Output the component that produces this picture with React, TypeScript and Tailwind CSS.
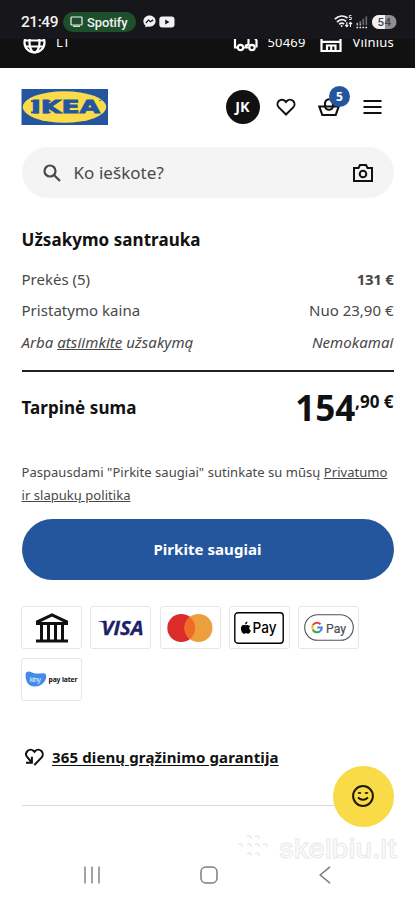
import React from "react";

function StatusBar() {
  return (
    <div className="h-[39px] bg-[#17171b] pl-[21px] pr-[18px] pt-[4px] flex items-center justify-between text-[#f1f1f3]">
      <div className="flex items-center">
        <svg width="38" height="16" viewBox="0 0 38 16" fill="currentColor">
          <text x="0" y="13" fontFamily="Roboto" fontSize="15.5" fontWeight="500" textLength="37.5">
            21:49
          </text>
        </svg>
        <div className="ml-[4px] h-[20px] w-[73px] rounded-full bg-[#1d4f2c] flex items-center pl-[7px]">
          <svg width="13" height="11" viewBox="0 0 13 11" fill="none" stroke="currentColor" strokeWidth="1.2">
            <rect x="1" y="1" width="11" height="8" rx="0.8" />
            <path d="M3 10.3h7" />
          </svg>
          <svg width="42" height="16" viewBox="0 0 42 16" fill="currentColor" className="ml-[4px]">
            <text x="0" y="12.5" fontFamily="Roboto" fontSize="13" fontWeight="500" textLength="40.5">
              Spotify
            </text>
          </svg>
        </div>
        <svg width="13" height="13" viewBox="0 0 13 13" className="ml-[7px]">
          <path
            d="M6.5.5C3 .5.4 3 .4 6.2c0 1.8.8 3.3 2 4.3v2l1.9-1c.7.2 1.4.3 2.2.3 3.5 0 6.1-2.5 6.1-5.7S10 .5 6.5.5z"
            fill="#f1f1f3"
          />
          <path d="M2.8 8l2.7-2.9 2 1.7 2.7-1.9" fill="none" stroke="#17171b" strokeWidth="1.3" />
        </svg>
        <svg width="16" height="12" viewBox="0 0 16 12" className="ml-[3px]">
          <rect x="0.3" y="0.5" width="15.2" height="11" rx="3" fill="#f1f1f3" />
          <path d="M6.2 3.5l4.3 2.5-4.3 2.5z" fill="#17171b" />
        </svg>
      </div>
      <div className="flex items-center">
        <svg width="19" height="15" viewBox="0 0 19 15" fill="none" stroke="currentColor" strokeWidth="1.8">
          <path d="M.8 5.2C4.8 1.4 9.8 1.2 13.5 4" />
          <path d="M3 8c2.6-2.6 6.2-3 9-.8" />
          <path d="M5.2 10.3c1.4-1.3 3.4-1.4 4.9-.3" />
          <circle cx="7.7" cy="12" r="0.9" fill="currentColor" stroke="none" />
          <path d="M17.5 1.5h-2.2v2h2v2h-2.3" strokeWidth="0.9" />
          <path d="M12.8 8v4.5M11.3 11l1.5 1.6 1.5-1.6M16.5 13V8.5M15 10l1.5-1.6L18 10" strokeWidth="1.1" />
        </svg>
        <svg width="13" height="14" viewBox="0 0 13 14" className="ml-[3px]">
          <path d="M1.3 10V7.8M4.3 10V6M7.3 10V3.8M10.3 10V1.5" stroke="#66666a" strokeWidth="1.7" />
          <path d="M.5 12.5h1.6M3.5 12.5h1.6M6.5 12.5h1.6M9.5 12.5h1.6" stroke="#f1f1f3" strokeWidth="1.6" />
          <path d="M1.3 10.6V8M4.3 10.6V8.5" stroke="#c9c9cc" strokeWidth="1" />
        </svg>
        <svg width="25" height="14" viewBox="0 0 25 14" className="ml-[3px]">
          <rect width="24.5" height="14" rx="7" fill="#8f8f92" />
          <path d="M7 0h6v14H7A7 7 0 0 1 7 0z" fill="#f1f1f3" />
          <text x="5.5" y="11" fontFamily="Roboto" fontSize="11.5" fontWeight="500" fill="#444" textLength="13.5">
            54
          </text>
        </svg>
      </div>
    </div>
  );
}

function LocationStrip() {
  return (
    <div className="h-[29px] bg-[#111] overflow-hidden text-white">
      {/* scrolled under the status bar, so the row is cut off at its top */}
      <div className="-mt-[9px] h-[26px] flex items-center pl-[23px] pr-[22px] text-[13px] tracking-[0.2px]">
        <svg width="23" height="23" viewBox="0 0 23 23" fill="none" stroke="currentColor" strokeWidth="2.2" className="-mt-[2px]">
          <circle cx="11.5" cy="11.5" r="10" />
          <ellipse cx="11.5" cy="11.5" rx="5" ry="10" />
          <path d="M2 9.5h19M3 15.5h17" />
        </svg>
        <span className="ml-[10px]">LT</span>
        <svg width="26" height="22" viewBox="0 0 26 22" fill="none" stroke="currentColor" strokeWidth="2.2" className="-mt-[4px] ml-auto">
          <path d="M5.500 17.500H3V4M10.500 17.500h6M13 16l3.500-1.500V3H20l4.500 7.500v7" />
          <circle cx="8.5" cy="17.5" r="2.7" />
          <circle cx="20" cy="17.5" r="2.7" />
        </svg>
        <span className="ml-[9px] w-[38px]">50469</span>
        <svg width="22" height="22" viewBox="0 0 22 22" fill="none" stroke="currentColor" strokeWidth="2.2" className="-mt-[3px] ml-[15px]">
          <path d="M1.500 3v17h19V3M1.500 10.800h19M7 20v-5.500h8.500V20M11.200 20v-5.500" />
        </svg>
        <span className="ml-[10px] -mr-px">Vilnius</span>
      </div>
    </div>
  );
}

function Header() {
  return (
    <header className="h-[79px] pb-px pl-[21px] pr-[33.5px] flex items-center text-[#111]">
      <svg width="87" height="36" viewBox="0 0 87 36">
        <rect x="0.5" width="86.5" height="36" fill="#24569f" />
        <ellipse cx="43.5" cy="18" rx="41.8" ry="15.8" fill="#fadb4a" />
        <g fill="#24569f">
          <text
            x="10"
            y="24"
            fontFamily="DejaVu Sans"
            fontSize="17"
            fontWeight="700"
            stroke="#24569f"
            strokeWidth="0.8"
            textLength="69"
            lengthAdjust="spacingAndGlyphs"
          >
            IKEA
          </text>
          {/* slabs of the I and the foot of the K */}
          <path d="M10 11.300h8v1.800h-8zM10 22.500h8v1.800h-8zM22 11.300h7.500v1.800H22zM22 22.500h7.500v1.800H22z" />
          <circle cx="79" cy="11.500" r="0.8" />
        </g>
      </svg>
      <div className="ml-auto size-[34px] rounded-full bg-[#111] text-white text-[14.5px] font-bold flex items-center justify-center">
        JK
      </div>
      <svg width="20" height="18" viewBox="0 0 20 18" fill="none" stroke="currentColor" strokeWidth="2" className="ml-[16px]">
        <path d="M10 16.500L2.800 9.400C1.100 7.600 1.100 4.700 2.800 3 4.600 1.200 7.400 1.200 9.200 3l.8.900.8-.9c1.800-1.800 4.600-1.800 6.400 0 1.700 1.700 1.700 4.600 0 6.400z" />
      </svg>
      <div className="relative ml-[21px]">
        <svg width="24" height="20" viewBox="0 0 24 20" fill="none" stroke="currentColor" strokeWidth="2.1">
          <path d="M2.300 9.500h19.400l-3 8.500H5.300z" />
          <path d="M8 9.500V6.500a4 4.300 0 0 1 8 0v2.500a4 3.800 0 0 1-8 0" />
        </svg>
        <span className="absolute -top-[11px] left-[12.5px] size-[21px] rounded-full bg-[#24569f] text-white text-[12px] font-bold flex items-center justify-center">
          5
        </span>
      </div>
      <svg width="19" height="14" viewBox="0 0 19 14" stroke="currentColor" strokeWidth="2" className="ml-[22px]">
        <path d="M.5 1h18M.5 7h18M.5 13h18" />
      </svg>
    </header>
  );
}

function SearchBox() {
  return (
    <div className="mx-[21.5px] h-[51px] rounded-full bg-[#f4f4f4] flex items-center pl-[21px] pr-[21px] text-[#484848]">
      <svg width="18" height="18" viewBox="0 0 18 18" fill="none" stroke="currentColor" strokeWidth="2.2">
        <circle cx="7" cy="7" r="5.5" />
        <path d="M11 11l6 6" />
      </svg>
      <span className="ml-[13px] text-[17px] tracking-[0.05px]">Ko ieškote?</span>
      <svg width="20" height="18" viewBox="0 0 20 18" fill="none" stroke="#111" strokeWidth="2" className="ml-auto">
        <path d="M1 4h4.500L7 1h6l1.500 3H19v13H1z" />
        <circle cx="10" cy="10" r="3.3" />
      </svg>
    </div>
  );
}

function Summary() {
  return (
    <section className="mx-[21.5px] mt-[29px] text-[#484848] text-[15px]">
      <h2 className="h-[26px] leading-[26px] text-[17px] font-bold tracking-[0.05px] text-[#111]">Užsakymo santrauka</h2>
      <div className="mt-[10px] h-[32px] flex items-center justify-between">
        <span>Prekės (5)</span>
        <span className="font-bold tracking-[-0.3px]">131 €</span>
      </div>
      <div className="h-[31px] flex items-center justify-between">
        <span className="tracking-[0.03px]">Pristatymo kaina</span>
        <span>Nuo 23,90 €</span>
      </div>
      <div className="h-[32px] flex items-center justify-between italic">
        <span className="tracking-[0.05px]">
          Arba <a className="underline">atsiimkite</a> užsakymą
        </span>
        <span className="tracking-[0.05px]">Nemokamai</span>
      </div>
      <div className="mt-[12px] h-[2px] bg-[#222]" />
      <div className="h-[71px] flex items-center justify-between text-[#111] font-bold">
        <span className="text-[17px] tracking-[0.08px]">Tarpinė suma</span>
        <span className="flex items-start">
          <span className="text-[35px] leading-[40px] tracking-[-0.1px]">154</span>
          <span className="text-[17px] leading-[27px]">,90 €</span>
        </span>
      </div>
    </section>
  );
}

function PayCard({ children }: { children: React.ReactNode }) {
  return (
    <div className="h-[43px] w-[61px] rounded-[3px] border border-[#e6e6e6] flex items-center justify-center">
      {children}
    </div>
  );
}

function PaymentMethods() {
  return (
    <div className="ml-[21.25px] mr-[20px] mt-[26px] flex flex-wrap gap-x-[8.2px] gap-y-[9px]">
      <PayCard>
        <svg width="34" height="30" viewBox="0 0 34 30" fill="none" stroke="#111" strokeWidth="3">
          <path d="M2.500 10.500V8.800L17 1.900l14.500 6.900v1.700z" />
          <path d="M6.500 11v17M13.500 11v17M20.500 11v17M27.500 11v17" />
          <path d="M1 28h32" />
        </svg>
      </PayCard>
      <PayCard>
        <svg width="46" height="16" viewBox="0 0 46 16" fill="#1d2069">
          <text
            x="3.5"
            y="15"
            fontFamily="Open Sans"
            fontSize="19.5"
            fontWeight="700"
            fontStyle="italic"
            textLength="42"
            lengthAdjust="spacingAndGlyphs"
            stroke="#1d2069"
            strokeWidth="0.3"
          >
            VISA
          </text>
          <path d="M0 1h7l1.500 4C6 2.700 3.500 1.700 0 1.300z" />
        </svg>
      </PayCard>
      <PayCard>
        <svg width="46" height="28" viewBox="0 0 46 28">
          <circle cx="14.3" cy="14" r="14" fill="#dc2b2b" />
          <circle cx="31.5" cy="14" r="14" fill="#eb9f3d" />
          <path d="M22.900 3a14 14 0 0 1 0 22 14 14 0 0 1 0-22z" fill="#f06a28" />
        </svg>
      </PayCard>
      <PayCard>
        <svg width="50" height="32" viewBox="0 0 50 32">
          <rect x="0.8" y="0.8" width="48.4" height="30.4" rx="3" fill="#fff" stroke="#000" strokeWidth="1.4" />
          <path
            d="M14.600 13.100c-.8-.9-2-.9-2.700-.6-.7.300-1.200.3-1.900 0-2.200-.8-3.900 1-3.600 3.800.2 2 1.500 4.800 3.100 4.800.8 0 1.100-.5 2.100-.5s1.300.5 2.100.5c1.200 0 2.300-2 2.600-3.100-2.200-1-2.100-3.900-.1-4.900zM12.800 8.800c-1.500.2-2.500 1.500-2.300 3 1.400 0 2.500-1.500 2.300-3z"
            transform="translate(.6 .6)"
          />
          <text x="18.5" y="20.8" fontFamily="Inter" fontSize="15" fontWeight="500" textLength="24" lengthAdjust="spacingAndGlyphs">
            Pay
          </text>
        </svg>
      </PayCard>
      <PayCard>
        <svg width="50" height="27" viewBox="0 0 50 27" fill="none">
          <rect x="0.7" y="0.7" width="48.6" height="25.6" rx="12.8" stroke="#505357" strokeWidth="1.1" />
          <g strokeWidth="2.1">
            <path d="M16.500 10.200a4.800 4.800 0 0 0-7.600.9" stroke="#ea4335" />
            <path d="M8.900 11.100a4.800 4.800 0 0 0 0 4.800" stroke="#fbbc04" />
            <path d="M8.900 15.900a4.800 4.800 0 0 0 7.300 1.200" stroke="#34a853" />
            <path d="M16.200 17.100a4.800 4.800 0 0 0 1.600-3.600h-4.600" stroke="#4285f4" />
          </g>
          <text
            x="22"
            y="18.5"
            fontFamily="Roboto"
            fontSize="13.5"
            fill="#4a4d51"
            stroke="#4a4d51"
            strokeWidth="0.2"
            textLength="20"
            lengthAdjust="spacingAndGlyphs"
          >
            Pay
          </text>
        </svg>
      </PayCard>
      <PayCard>
        <svg width="53" height="17" viewBox="0 0 53 17">
          <path
            d="M.6 3.500C.7-.2 4.500.1 7 1.500c4 2 7.500.5 11.500.8 3.500.4 3.300 4 1.600 7.200-2.500 4.500-7 6.500-11.500 6C2.500 14.800.4 9.500.6 3.500z"
            fill="#468ae9"
          />
          <text x="4.5" y="11.3" fontFamily="Noto Sans" fontSize="7" fontWeight="600" fill="#b9e3ff" textLength="11.5">
            kiny
          </text>
          <text x="23.5" y="10.6" fontFamily="Noto Sans" fontSize="6.8" fontWeight="700" fill="#111" textLength="29">
            pay later
          </text>
        </svg>
      </PayCard>
    </div>
  );
}

function ReturnPolicy() {
  return (
    <div className="mx-[22px] mt-[44px] h-[61px] border-b border-[#d8d8d8]">
      <div className="flex h-[24px] items-center pl-[3px] text-[#111]">
        <svg width="19" height="18" viewBox="0 0 19 18" fill="none" stroke="currentColor" strokeWidth="2">
          <path d="M9.300 17l6.900-7.100c2-2 2-5 .2-6.900-1.800-1.700-4.500-1.700-6.200 0l-.7.800-.8-.8C6.900 1.300 4.200 1.300 2.500 3 .7 4.800.7 7.400 2.300 9.200l4 4.800" />
          <path d="M1 14.800h5.900V8.800" />
        </svg>
        <a className="ml-[8px] text-[15px] tracking-[0.13px] font-bold underline underline-offset-[2px]">
          365 dienų grąžinimo garantija
        </a>
      </div>
    </div>
  );
}

function FeedbackButton() {
  return (
    <button className="absolute left-[332.5px] top-[765.5px] size-[61px] rounded-full bg-[#f8db46] flex items-center justify-center">
      <svg width="22" height="22" viewBox="0 0 22 22" fill="none" stroke="#21180a" strokeWidth="2">
        <circle cx="11" cy="11" r="9.9" />
        <path d="M6 8.300q1.500-1 3 0M13 8.300q1.500-1 3 0" strokeWidth="1.7" />
        <path d="M6 12.500q5 4.600 10 0" />
      </svg>
    </button>
  );
}

function Watermark() {
  return (
    <svg width="162" height="32" viewBox="0 0 162 32" fill="none" className="absolute left-[236px] top-[832px]">
      <g stroke="#e9e9e9" strokeWidth="1.5">
        <path d="M11 5q4-3 4 2M19 5q4-3 4 2M2 13q4-3 4 2M11 13q4-3 4 2M19 13q4-3 4 2M27 13q4-3 4 2M11 22q4-3 4 2M19 22q4-3 4 2" />
      </g>
      <text
        x="43"
        y="25.5"
        fontFamily="Inter"
        fontSize="26"
        fontWeight="500"
        fill="#fcfcfc"
        stroke="#e9e9e9"
        strokeWidth="0.9"
        textLength="118"
        lengthAdjust="spacingAndGlyphs"
      >
        skelbiu.lt
      </text>
    </svg>
  );
}

function NavigationBar() {
  return (
    <nav className="mt-[59px] h-[20px] pl-[83px] pr-[84px] flex items-center justify-between">
      <svg width="18" height="18" viewBox="0 0 18 18" stroke="#7d7d7d" strokeWidth="1.4">
        <path d="M2 .5v17M9 .5v17M16 .5v17" />
      </svg>
      <svg width="18" height="18" viewBox="0 0 18 18" fill="none" stroke="#7d7d7d" strokeWidth="1.5" className="-ml-[3px]">
        <rect x="1" y="1" width="16" height="16" rx="4.8" />
      </svg>
      <svg width="12" height="18" viewBox="0 0 12 18" fill="none" stroke="#7d7d7d" strokeWidth="1.5">
        <path d="M11 .8L1.200 9l9.800 8.200" />
      </svg>
    </nav>
  );
}

export default function App() {
  return (
    <div className="relative h-[900px] w-[415px] overflow-hidden bg-white font-['Noto_Sans',sans-serif]">
      <StatusBar />
      <LocationStrip />
      <Header />
      <SearchBox />
      <Summary />
      <p className="mx-[21.5px] mt-[18px] text-[13px] leading-[23px] tracking-[0.04px] text-[#484848] whitespace-nowrap">
        Paspausdami "Pirkite saugiai" sutinkate su mūsų <a className="underline">Privatumo</a>
        <br />
        <a className="underline">ir slapukų politika</a>
      </p>
      <button className="mt-[12px] ml-[21.5px] h-[61px] w-[372px] rounded-full bg-[#24569d] text-[15px] tracking-[0.05px] font-bold text-white block">
        Pirkite saugiai
      </button>
      <PaymentMethods />
      <ReturnPolicy />
      <NavigationBar />
      <Watermark />
      <FeedbackButton />
    </div>
  );
}
